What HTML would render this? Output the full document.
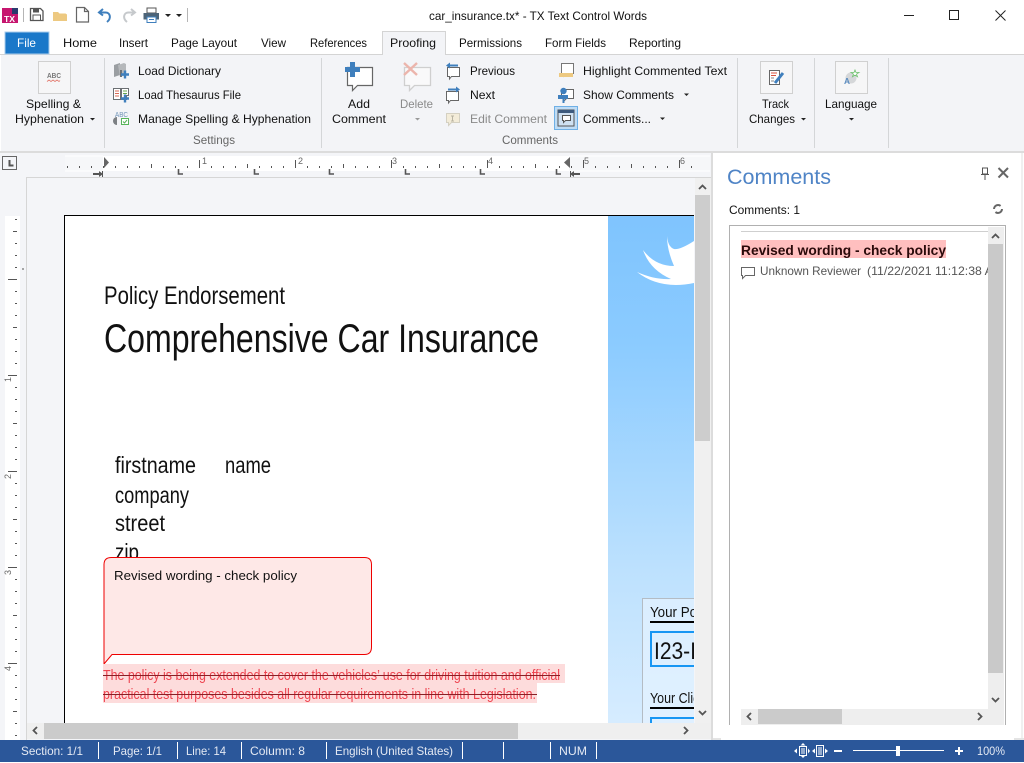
<!DOCTYPE html>
<html lang="en">
<head>
<meta charset="utf-8">
<title>car_insurance.tx* - TX Text Control Words</title>
<style>
html,body{margin:0;padding:0;background:#fff;width:1024px;height:763px;overflow:hidden}
svg{display:block;position:absolute;left:0;top:0}
text{font-family:"Liberation Sans",sans-serif;font-size:12px;fill:#111}
.g{fill:#8a8a8a}
.sg{fill:#666}
.st{fill:#e4e9f3}
</style>
</head>
<body>
<svg width="1024" height="763" viewBox="0 0 1024 763" xmlns="http://www.w3.org/2000/svg">
<defs>
<linearGradient id="sky" x1="0" y1="0" x2="0" y2="1"><stop offset="0" stop-color="#7fc4fe"/><stop offset=".25" stop-color="#8bcbff"/><stop offset=".7" stop-color="#bde1fe"/><stop offset="1" stop-color="#d6ecff"/></linearGradient>
<clipPath id="docclip"><rect x="26" y="178" width="668" height="545"/></clipPath>
<clipPath id="listclip"><rect x="741" y="230" width="247" height="60"/></clipPath>
</defs>

<!-- base -->
<rect width="1024" height="763" fill="#fff"/>

<!-- title bar: logo -->
<rect x="2" y="8" width="16" height="15" fill="#c6166f"/>
<rect x="12" y="8" width="6" height="6" fill="#2b3a6e"/>
<text x="4" y="22" style="font-size:8px;font-weight:bold;fill:#fff" textLength="11" lengthAdjust="spacingAndGlyphs">TX</text>
<rect x="23" y="8" width="1" height="14" fill="#b5b5b5"/>
<!-- save -->
<path d="M30.500 8.500h10l2.500 2.500v9.500h-12.500z" fill="none" stroke="#555" stroke-width="1.300"/>
<rect x="33" y="8.500" width="6" height="4" fill="#555"/>
<rect x="33" y="15" width="7.500" height="5.500" fill="none" stroke="#555"/>
<!-- folder -->
<path d="M53 12h5l1.500 1.500h6l1.500 1v6.500h-14z" fill="#edc981"/>
<!-- new -->
<path d="M76.500 7.500h8l4 4v10.500h-12zM84.500 7.500v4h4" fill="#fff" stroke="#666" stroke-width="1.200"/>
<!-- undo / redo -->
<path d="M103 9l-4 3.500 4 3M99.500 12.500h6c5 0 6 6 1.500 9.500" fill="none" stroke="#3f7fbd" stroke-width="2"/>
<path d="M131 9l4 3.500-4 3M134.500 12.500h-6c-5 0-6 6-1.500 9.500" fill="none" stroke="#c6c9cc" stroke-width="2"/>
<!-- print -->
<rect x="147" y="8" width="9" height="5" fill="#fff" stroke="#555"/>
<rect x="143.500" y="13" width="15.500" height="6.500" fill="#4d6478"/>
<rect x="147" y="17" width="9" height="5.500" fill="#fff" stroke="#3f7fbd"/>
<rect x="149" y="19" width="5" height="1" fill="#3f7fbd"/>
<polygon points="165,14 171,14 168,17" fill="#222"/>
<polygon points="176,14 182,14 179,17" fill="#222"/>
<rect x="187" y="8" width="1" height="14" fill="#b5b5b5"/>

<text x="429" y="20" textLength="218" lengthAdjust="spacingAndGlyphs">car_insurance.tx* - TX Text Control Words</text>

<!-- window controls -->
<rect x="904" y="15" width="10" height="1" fill="#222"/>
<rect x="949.500" y="10.500" width="9" height="9" fill="none" stroke="#222"/>
<path d="M995.500 10.500l10 10M1005.500 10.500l-10 10" stroke="#222" fill="none"/>

<!-- tabs -->
<rect x="0" y="54" width="1024" height="1" fill="#d4d4d4"/>
<rect x="5" y="32" width="44" height="22" fill="#1a78c9" stroke="#a9cdec"/>
<text x="17" y="47" style="fill:#fff" textLength="19" lengthAdjust="spacingAndGlyphs">File</text>
<text x="63" y="47" textLength="34" lengthAdjust="spacingAndGlyphs">Home</text>
<text x="119" y="47" textLength="29" lengthAdjust="spacingAndGlyphs">Insert</text>
<text x="171" y="47" textLength="66" lengthAdjust="spacingAndGlyphs">Page Layout</text>
<text x="261" y="47" textLength="25" lengthAdjust="spacingAndGlyphs">View</text>
<text x="310" y="47" textLength="57" lengthAdjust="spacingAndGlyphs">References</text>
<path d="M382.500 55v-23.500h63v23.500" fill="#f3f4f7" stroke="#d4d4d4"/>
<rect x="383" y="54" width="62" height="2" fill="#f3f4f7"/>
<text x="390" y="47" textLength="46" lengthAdjust="spacingAndGlyphs">Proofing</text>
<text x="459" y="47" textLength="63" lengthAdjust="spacingAndGlyphs">Permissions</text>
<text x="545" y="47" textLength="61" lengthAdjust="spacingAndGlyphs">Form Fields</text>
<text x="629" y="47" textLength="52" lengthAdjust="spacingAndGlyphs">Reporting</text>

<!-- ribbon -->
<rect x="1" y="55" width="1023" height="96" fill="#f3f4f7"/>
<rect x="0" y="151" width="1024" height="2" fill="#dcdcdc"/>
<rect x="104" y="58" width="1" height="90" fill="#d4d6d8"/>
<rect x="321" y="58" width="1" height="90" fill="#d4d6d8"/>
<rect x="737" y="58" width="1" height="90" fill="#d4d6d8"/>
<rect x="814" y="58" width="1" height="90" fill="#d4d6d8"/>
<rect x="888" y="58" width="1" height="90" fill="#d4d6d8"/>

<!-- spelling -->
<rect x="38.500" y="61.500" width="32" height="32" fill="#f6f6f7" stroke="#d0d0d0"/>
<text x="47" y="78" style="font-size:7px;font-weight:bold;fill:#777" textLength="14" lengthAdjust="spacingAndGlyphs">ABC</text>
<path d="M47 81.500l2-1.500 2 1.500 2-1.500 2 1.500 2-1.500 2 1.500 1-1" fill="none" stroke="#e2766a" stroke-width=".8"/>
<text x="26" y="108" textLength="55" lengthAdjust="spacingAndGlyphs">Spelling &amp;</text>
<text x="15" y="123" textLength="69" lengthAdjust="spacingAndGlyphs">Hyphenation</text>
<polygon points="90,118 95,118 92.500,120.500" fill="#222"/>

<!-- load dict icon -->
<path d="M114 65l6-2v12l-6 2z" fill="#9a9ea2"/>
<path d="M118 65l6-2 2 1v11l-6 2z" fill="#b5b8bb"/>
<rect x="120" y="70" width="2" height="7" fill="#6d7175"/>
<path d="M121 74.500h8M125 70.500v8" stroke="#3f7fbd" stroke-width="2.400" fill="none"/>
<text x="138" y="75" textLength="83" lengthAdjust="spacingAndGlyphs">Load Dictionary</text>
<!-- thesaurus icon -->
<path d="M113.500 88.500h7v11h-7zM121.500 88.500h7v7h-2v4h-5z" fill="#fff" stroke="#6b6f73"/>
<path d="M115 91h4M115 93.500h4M115 96h4" stroke="#d96a55" fill="none"/>
<path d="M123 91h4M123 93.500h4" stroke="#6aa84f" fill="none"/>
<path d="M121 98.500h8M125 94.500v8" stroke="#3f7fbd" stroke-width="2.400" fill="none"/>
<text x="138" y="99" textLength="103" lengthAdjust="spacingAndGlyphs">Load Thesaurus File</text>
<!-- manage icon -->
<text x="115" y="117" style="font-size:7px;fill:#6f93b8" textLength="13" lengthAdjust="spacingAndGlyphs">ABC</text>
<path d="M117 117a4 4 0 0 0 0 8" fill="#7c8084"/>
<rect x="121.500" y="118.500" width="7" height="6" fill="#fff" stroke="#57b45a"/>
<path d="M123 121.500l1.500 1.500 2.500-3" fill="none" stroke="#57b45a"/>
<text x="138" y="123" textLength="173" lengthAdjust="spacingAndGlyphs">Manage Spelling &amp; Hyphenation</text>
<text class="sg" x="193" y="144" textLength="42" lengthAdjust="spacingAndGlyphs">Settings</text>

<!-- add comment -->
<path d="M347.500 67.500h25v18h-15l-5 5v-5h-5z" fill="#fff" stroke="#666" stroke-width="1.200"/>
<path d="M345 69.500h15M352.500 62v15" stroke="#3f7fbd" stroke-width="5" fill="none"/>
<text x="348" y="108" textLength="22" lengthAdjust="spacingAndGlyphs">Add</text>
<text x="332" y="123" textLength="54" lengthAdjust="spacingAndGlyphs">Comment</text>
<!-- delete -->
<path d="M404.500 67.500h26v18h-16l-5 5v-5h-5z" fill="#f9f9fa" stroke="#cfcfcf" stroke-width="1.300"/>
<path d="M404 63l13 12M417 63l-13 12" stroke="#ecb5ac" stroke-width="2.400" fill="none"/>
<text class="g" x="400" y="108" textLength="33" lengthAdjust="spacingAndGlyphs">Delete</text>
<polygon points="415,118 420,118 417.500,120.500" fill="#999"/>

<!-- prev next edit -->
<path d="M447.500 67.500h12v9h-8l-2 2.500v-2.500h-2z" fill="#fff" stroke="#666"/>
<path d="M448 65.500h10" stroke="#3f7fbd" stroke-width="2"/><polygon points="446,65.500 450,62.500 450,68.500" fill="#3f7fbd"/>
<text x="470" y="75" textLength="45" lengthAdjust="spacingAndGlyphs">Previous</text>
<path d="M446.500 91.500h12v9h-8l-2 2.500v-2.500h-2z" fill="#fff" stroke="#666"/>
<path d="M448 89.500h10" stroke="#3f7fbd" stroke-width="2"/><polygon points="460,89.500 456,86.500 456,92.500" fill="#3f7fbd"/>
<text x="470" y="99" textLength="25" lengthAdjust="spacingAndGlyphs">Next</text>
<path d="M446.500 113.500h13v9h-8l-3 3v-3h-2z" fill="#f3ecd9" stroke="#d4d0c2"/>
<path d="M451 116h3M452.500 116v5M451 121h3" stroke="#b8b3a3" fill="none"/>
<text class="g" x="470" y="123" textLength="77" lengthAdjust="spacingAndGlyphs">Edit Comment</text>
<text class="sg" x="502" y="144" textLength="56" lengthAdjust="spacingAndGlyphs">Comments</text>

<!-- highlight etc -->
<path d="M561.500 63.500h12v10h-8l-2 2.500v-2.500h-2z" fill="#fff" stroke="#777"/>
<rect x="559" y="73" width="14" height="4" fill="#edc981"/>
<text x="583" y="75" textLength="144" lengthAdjust="spacingAndGlyphs">Highlight Commented Text</text>
<path d="M561.500 89.500h12v9h-7l-3 3v-3h-2z" fill="#fff" stroke="#666"/>
<path d="M558 97h10" stroke="#3f7fbd" stroke-width="4"/>
<circle cx="563.500" cy="91" r="3.200" fill="#3f7fbd"/>
<rect x="562.500" y="99" width="2" height="4" fill="#3f7fbd"/>
<text x="583" y="99" textLength="91" lengthAdjust="spacingAndGlyphs">Show Comments</text>
<polygon points="684,93.500 689,93.500 686.500,96" fill="#222"/>
<rect x="554.500" y="106.500" width="23" height="23" fill="#bfdcf5" stroke="#6fb0e6"/>
<rect x="558" y="110" width="16" height="16" fill="#cfe1f2" stroke="#555"/>
<rect x="558" y="110" width="16" height="3" fill="#3d5a7e"/>
<path d="M562.500 115.500h8v5h-5l-2 2v-2h-1z" fill="#fff" stroke="#555"/>
<text x="583" y="123" textLength="68" lengthAdjust="spacingAndGlyphs">Comments...</text>
<polygon points="660,117.500 665,117.500 662.500,120" fill="#222"/>

<!-- track -->
<rect x="760.500" y="61.500" width="32" height="32" fill="#f6f6f7" stroke="#d0d0d0"/>
<path d="M769.500 70.500h10v14h-10z" fill="#fff" stroke="#666"/>
<path d="M771 73h6" stroke="#d9533f"/><path d="M771 75.500h5" stroke="#d9533f"/><path d="M771 78h3M771 81h3" stroke="#888"/>
<path d="M775 83l8-10" stroke="#3f7fbd" stroke-width="3"/>
<text x="762" y="108" textLength="27" lengthAdjust="spacingAndGlyphs">Track</text>
<text x="749" y="123" textLength="46" lengthAdjust="spacingAndGlyphs">Changes</text>
<polygon points="801,118 806,118 803.500,120.500" fill="#222"/>
<!-- language -->
<rect x="835.500" y="61.500" width="32" height="32" fill="#f6f6f7" stroke="#d0d0d0"/>
<circle cx="851" cy="78" r="5.500" fill="#d5d7d9"/>
<text x="844" y="84" style="font-size:8px;font-weight:bold;fill:#5b8cc0" textLength="6" lengthAdjust="spacingAndGlyphs">A</text>
<path d="M855 70l1 2.500h3l-2.500 1.600 1 2.600-2.500-1.600-2.500 1.600 1-2.600-2.500-1.600h3z" fill="#fff" stroke="#6cc06c" stroke-width=".8"/>
<text x="825" y="108" textLength="52" lengthAdjust="spacingAndGlyphs">Language</text>
<polygon points="849,118 854,118 851.500,120.500" fill="#222"/>

<!-- doc frame -->
<rect x="0" y="153" width="712" height="587" fill="#f4f5f8"/>
<rect x="26" y="177" width="686" height="1" fill="#d6d6d6"/>
<rect x="26" y="177" width="1" height="563" fill="#d6d6d6"/>

<!-- corner tab -->
<rect x="2.500" y="156.500" width="14" height="13" fill="#f4f5f8" stroke="#666" stroke-width="1"/>
<path d="M9.500 160v5.500h4" stroke="#555" stroke-width="2" fill="none"/>

<!-- h ruler -->
<rect x="65" y="156" width="645" height="15" fill="#f6f7f9"/>
<rect x="103" y="156" width="466" height="15" fill="#fff"/>
<path d="M65 156h38M65 171h38M569 156h141M569 171h141" stroke="#fff" fill="none"/>
<path d="M67 167H700" stroke="#555" stroke-width="2" stroke-dasharray="1 11" fill="none"/>
<g fill="#555">
<rect x="151" y="164" width="1" height="4"/><rect x="247" y="164" width="1" height="4"/><rect x="343" y="164" width="1" height="4"/><rect x="439" y="164" width="1" height="4"/><rect x="535" y="164" width="1" height="4"/><rect x="631" y="164" width="1" height="4"/>
<rect x="199" y="160" width="1" height="8"/><rect x="295" y="160" width="1" height="8"/><rect x="391" y="160" width="1" height="8"/><rect x="487" y="160" width="1" height="8"/><rect x="583" y="160" width="1" height="8"/><rect x="679" y="160" width="1" height="8"/>
</g>
<text x="202" y="164" style="font-size:9px;fill:#666">1</text><text x="298" y="164" style="font-size:9px;fill:#666">2</text><text x="392" y="164" style="font-size:9px;fill:#666">3</text><text x="488" y="164" style="font-size:9px;fill:#666">4</text><text x="584" y="164" style="font-size:9px;fill:#666">5</text><text x="680" y="164" style="font-size:9px;fill:#666">6</text>
<path d="M178.500 169v5h4.500M254.500 169v5h4.500M329.500 169v5h4.500M405.500 169v5h4.500M480.500 169v5h4.500M556.500 169v5h4.500" stroke="#555" stroke-width="1.600" fill="none"/>
<polygon points="104,157 104,168 109,162.500" fill="#666"/>
<path d="M93 174h8" stroke="#555" stroke-width="2"/><polygon points="103,174 99,171 99,177" fill="#555"/><rect x="102" y="171" width="1" height="6" fill="#555"/>
<polygon points="570,157 570,168 564,162.500" fill="#666"/>
<path d="M572 174h8" stroke="#555" stroke-width="2"/><polygon points="570,174 574,171 574,177" fill="#555"/><rect x="570" y="171" width="1" height="6" fill="#555"/>

<!-- v ruler -->
<rect x="5" y="216" width="15" height="524" fill="#fff"/>
<path d="M16 219V740" stroke="#555" stroke-width="2" stroke-dasharray="1 11" fill="none"/>
<path d="M13 231.500h4M13 327.500h4M13 423.500h4M13 519.500h4M13 615.500h4M13 711.500h4" stroke="#555" fill="none"/>
<path d="M22 269h2" stroke="#555" fill="none"/>
<path d="M8 279.500h9M8 375.500h9M8 471.500h9M8 567.500h9M8 663.500h9" stroke="#555" fill="none"/>
<text transform="translate(11 375) rotate(-90)" style="font-size:9px;fill:#666" x="-7" y="0">1</text>
<text transform="translate(11 472) rotate(-90)" style="font-size:9px;fill:#666" x="-7" y="0">2</text>
<text transform="translate(11 568) rotate(-90)" style="font-size:9px;fill:#666" x="-7" y="0">3</text>
<text transform="translate(11 664) rotate(-90)" style="font-size:9px;fill:#666" x="-7" y="0">4</text>

<!-- page -->
<rect x="65" y="216" width="543" height="507" fill="#fff"/>
<path d="M64.500 723V215.500H694" fill="none" stroke="#000"/>
<rect x="608" y="216" width="86" height="507" fill="url(#sky)"/>
<path d="M667 236Q668 247 674 249Q680 250 694 241L694 283Q660 290 637 272Q655 280 671 279Q650 270 643 250Q655 266 674 266Q667 250 667 236Z" fill="#fff"/>

<text x="104" y="304" style="font-size:25px" textLength="181" lengthAdjust="spacingAndGlyphs">Policy Endorsement</text>
<text x="104" y="352" style="font-size:40px" textLength="435" lengthAdjust="spacingAndGlyphs">Comprehensive Car Insurance</text>
<text x="115" y="473" style="font-size:23px" textLength="81" lengthAdjust="spacingAndGlyphs">firstname</text>
<text x="225" y="473" style="font-size:23px" textLength="46" lengthAdjust="spacingAndGlyphs">name</text>
<text x="115" y="503" style="font-size:23px" textLength="74" lengthAdjust="spacingAndGlyphs">company</text>
<text x="115" y="531" style="font-size:23px" textLength="50" lengthAdjust="spacingAndGlyphs">street</text>
<text x="115" y="560" style="font-size:23px" textLength="24" lengthAdjust="spacingAndGlyphs">zip</text>

<!-- policy box -->
<rect x="643" y="599" width="51" height="124" fill="#e3f2ff" fill-opacity=".75"/>
<path d="M694 598.500H642.500V723" fill="none" stroke="#b4bcc4"/>
<g clip-path="url(#docclip)">
<text x="650" y="617" style="font-size:15px" textLength="50" lengthAdjust="spacingAndGlyphs">Your Pol</text>
<text x="654" y="659" style="font-size:24px" textLength="42" lengthAdjust="spacingAndGlyphs">I23-I</text>
<text x="650" y="703" style="font-size:15px" textLength="50" lengthAdjust="spacingAndGlyphs">Your Clie</text>
</g>
<rect x="650" y="621" width="44" height="2" fill="#000"/>
<path d="M694 632H651V666H694" fill="none" stroke="#1796f3" stroke-width="2"/>
<rect x="652" y="633" width="42" height="32" fill="#fff" fill-opacity="0"/>
<rect x="650" y="707" width="44" height="2" fill="#000"/>
<path d="M694 718H651V723" fill="none" stroke="#1796f3" stroke-width="2"/>

<!-- balloon -->
<path d="M111.500 557.500H364.500Q371.500 557.500 371.500 564.500V647Q371.500 654.500 364.500 654.500H112L104 664V564.500Q104 557.500 111.500 557.500Z" fill="#fee8e7" stroke="#ee0000"/>
<text x="114" y="580" style="font-size:13px" textLength="183" lengthAdjust="spacingAndGlyphs">Revised wording - check policy</text>

<!-- struck text -->
<rect x="103" y="664" width="462" height="19" fill="#fddcdc"/>
<rect x="103" y="683" width="434" height="20" fill="#fddcdc"/>
<text x="103" y="680" style="font-size:15px;fill:#ee4450" textLength="457" lengthAdjust="spacingAndGlyphs">The policy is being extended to cover the vehicles’ use for driving tuition and official</text>
<text x="103" y="699" style="font-size:15px;fill:#ee4450" textLength="433" lengthAdjust="spacingAndGlyphs">practical test purposes besides all regular requirements in line with Legislation.</text>
<rect x="103" y="675" width="457" height="1" fill="#8a1f25"/>
<rect x="103" y="694" width="434" height="1" fill="#8a1f25"/>

<!-- doc scrollbars -->
<rect x="695" y="178" width="16" height="545" fill="#f0f0f0"/>
<rect x="695" y="195" width="15" height="246" fill="#cdcdcd"/>
<path d="M699 189l3.500-3.500 3.500 3.500" fill="none" stroke="#555" stroke-width="1.800"/>
<path d="M699 711l3.500 3.500 3.500-3.500" fill="none" stroke="#555" stroke-width="1.800"/>
<rect x="27" y="723" width="684" height="16" fill="#efefef"/>
<rect x="44" y="723" width="474" height="16" fill="#cbcbcb"/>
<path d="M37 727l-3.500 3.500 3.500 3.500" fill="none" stroke="#555" stroke-width="1.800"/>
<path d="M684 727l3.500 3.500-3.500 3.500" fill="none" stroke="#555" stroke-width="1.800"/>

<!-- panel -->
<rect x="712" y="153" width="312" height="587" fill="#fff"/>
<rect x="711" y="153" width="2" height="587" fill="#dcdcdc"/>
<rect x="1021" y="153" width="2" height="585" fill="#f0f0f0"/>
<rect x="713" y="738" width="8" height="2" fill="#e4e4e4"/>
<rect x="1014" y="738" width="10" height="2" fill="#e4e4e4"/>
<text x="727" y="184" style="font-size:21px;fill:#4f84c6" textLength="104" lengthAdjust="spacingAndGlyphs">Comments</text>
<path d="M982.500 168h5v6h-5zM981 174.500h8M985 175v5" fill="none" stroke="#555"/>
<path d="M998.500 168l9.500 9.500M1008 168l-9.500 9.500" stroke="#666" stroke-width="2" fill="none"/>
<text x="729" y="214" textLength="71" lengthAdjust="spacingAndGlyphs">Comments: 1</text>
<circle cx="998" cy="209" r="4" fill="none" stroke="#666" stroke-width="2" stroke-dasharray="9 3.500"/>
<path d="M729.500 725V225.500H1005.500V725" fill="none" stroke="#b0b0b0"/>
<rect x="741" y="231" width="247" height="1" fill="#cfcfcf"/>
<rect x="741" y="240" width="205" height="18" fill="#ffbfbf"/>
<text x="741" y="255" style="font-size:13.500px;font-weight:bold;fill:#2a0a0a" textLength="205" lengthAdjust="spacingAndGlyphs">Revised wording - check policy</text>
<path d="M741.500 267.500h13v8h-9l-3 3v-3h-1z" fill="#fff" stroke="#666"/>
<text x="760" y="275" style="fill:#555" textLength="101" lengthAdjust="spacingAndGlyphs">Unknown Reviewer</text>
<g clip-path="url(#listclip)"><text x="867" y="275" style="fill:#555" textLength="136" lengthAdjust="spacingAndGlyphs">(11/22/2021 11:12:38 AM</text></g>
<rect x="988" y="227" width="16" height="498" fill="#eeeeee"/>
<rect x="988" y="244" width="15" height="429" fill="#c9c9c9"/>
<path d="M992 238l3.500-3.500 3.500 3.500" fill="none" stroke="#555" stroke-width="1.800"/>
<path d="M992 698l3.500 3.500 3.500-3.500" fill="none" stroke="#555" stroke-width="1.800"/>
<rect x="741" y="709" width="247" height="16" fill="#eeeeee"/>
<rect x="758" y="709" width="84" height="15" fill="#cbcbcb"/>
<path d="M751 713l-3.500 3.500 3.500 3.500" fill="none" stroke="#555" stroke-width="1.800"/>
<path d="M978 713l3.500 3.500-3.500 3.500" fill="none" stroke="#555" stroke-width="1.800"/>

<!-- status bar -->
<rect x="0" y="740" width="1024" height="22" fill="#2b579a"/>
<text class="st" x="21" y="755" textLength="62" lengthAdjust="spacingAndGlyphs">Section: 1/1</text>
<text class="st" x="113" y="755" textLength="49" lengthAdjust="spacingAndGlyphs">Page: 1/1</text>
<text class="st" x="186" y="755" textLength="40" lengthAdjust="spacingAndGlyphs">Line: 14</text>
<text class="st" x="250" y="755" textLength="55" lengthAdjust="spacingAndGlyphs">Column: 8</text>
<text class="st" x="335" y="755" textLength="118" lengthAdjust="spacingAndGlyphs">English (United States)</text>
<text class="st" x="559" y="755" textLength="28" lengthAdjust="spacingAndGlyphs">NUM</text>
<g fill="#fff">
<rect x="98" y="742" width="1" height="17"/><rect x="177" y="742" width="1" height="17"/><rect x="241" y="742" width="1" height="17"/><rect x="326" y="742" width="1" height="17"/><rect x="462" y="742" width="1" height="17"/><rect x="503" y="742" width="1" height="17"/><rect x="550" y="742" width="1" height="17"/><rect x="596" y="742" width="1" height="17"/>
</g>
<rect x="799.500" y="746.500" width="7" height="9" fill="none" stroke="#fff"/>
<path d="M801 749h4M801 751h4M801 753h4" stroke="#fff" fill="none"/>
<polygon points="803,743 800.500,745.500 805.500,745.500" fill="#fff"/>
<polygon points="803,758 800.500,755.500 805.500,755.500" fill="#fff"/>
<polygon points="794,751 797,748.500 797,753.500" fill="#fff"/>
<polygon points="810,751 808,748.500 808,753.500" fill="#fff"/>
<rect x="816.500" y="745.500" width="7" height="11" fill="none" stroke="#fff"/>
<path d="M818 748h4M818 750h4M818 752h4M818 754h4" stroke="#fff" fill="none"/>
<polygon points="812,751 815,748.500 815,753.500" fill="#fff"/>
<polygon points="828,751 825,748.500 825,753.500" fill="#fff"/>
<rect x="834" y="750" width="8" height="2" fill="#fff"/>
<rect x="853" y="750" width="91" height="1" fill="#fff"/>
<rect x="896" y="746" width="4" height="10" fill="#fff"/>
<rect x="955" y="750" width="8" height="2" fill="#fff"/>
<rect x="958" y="747" width="2" height="8" fill="#fff"/>
<text class="st" x="977" y="755" textLength="28" lengthAdjust="spacingAndGlyphs">100%</text>
</svg>
</body>
</html>
